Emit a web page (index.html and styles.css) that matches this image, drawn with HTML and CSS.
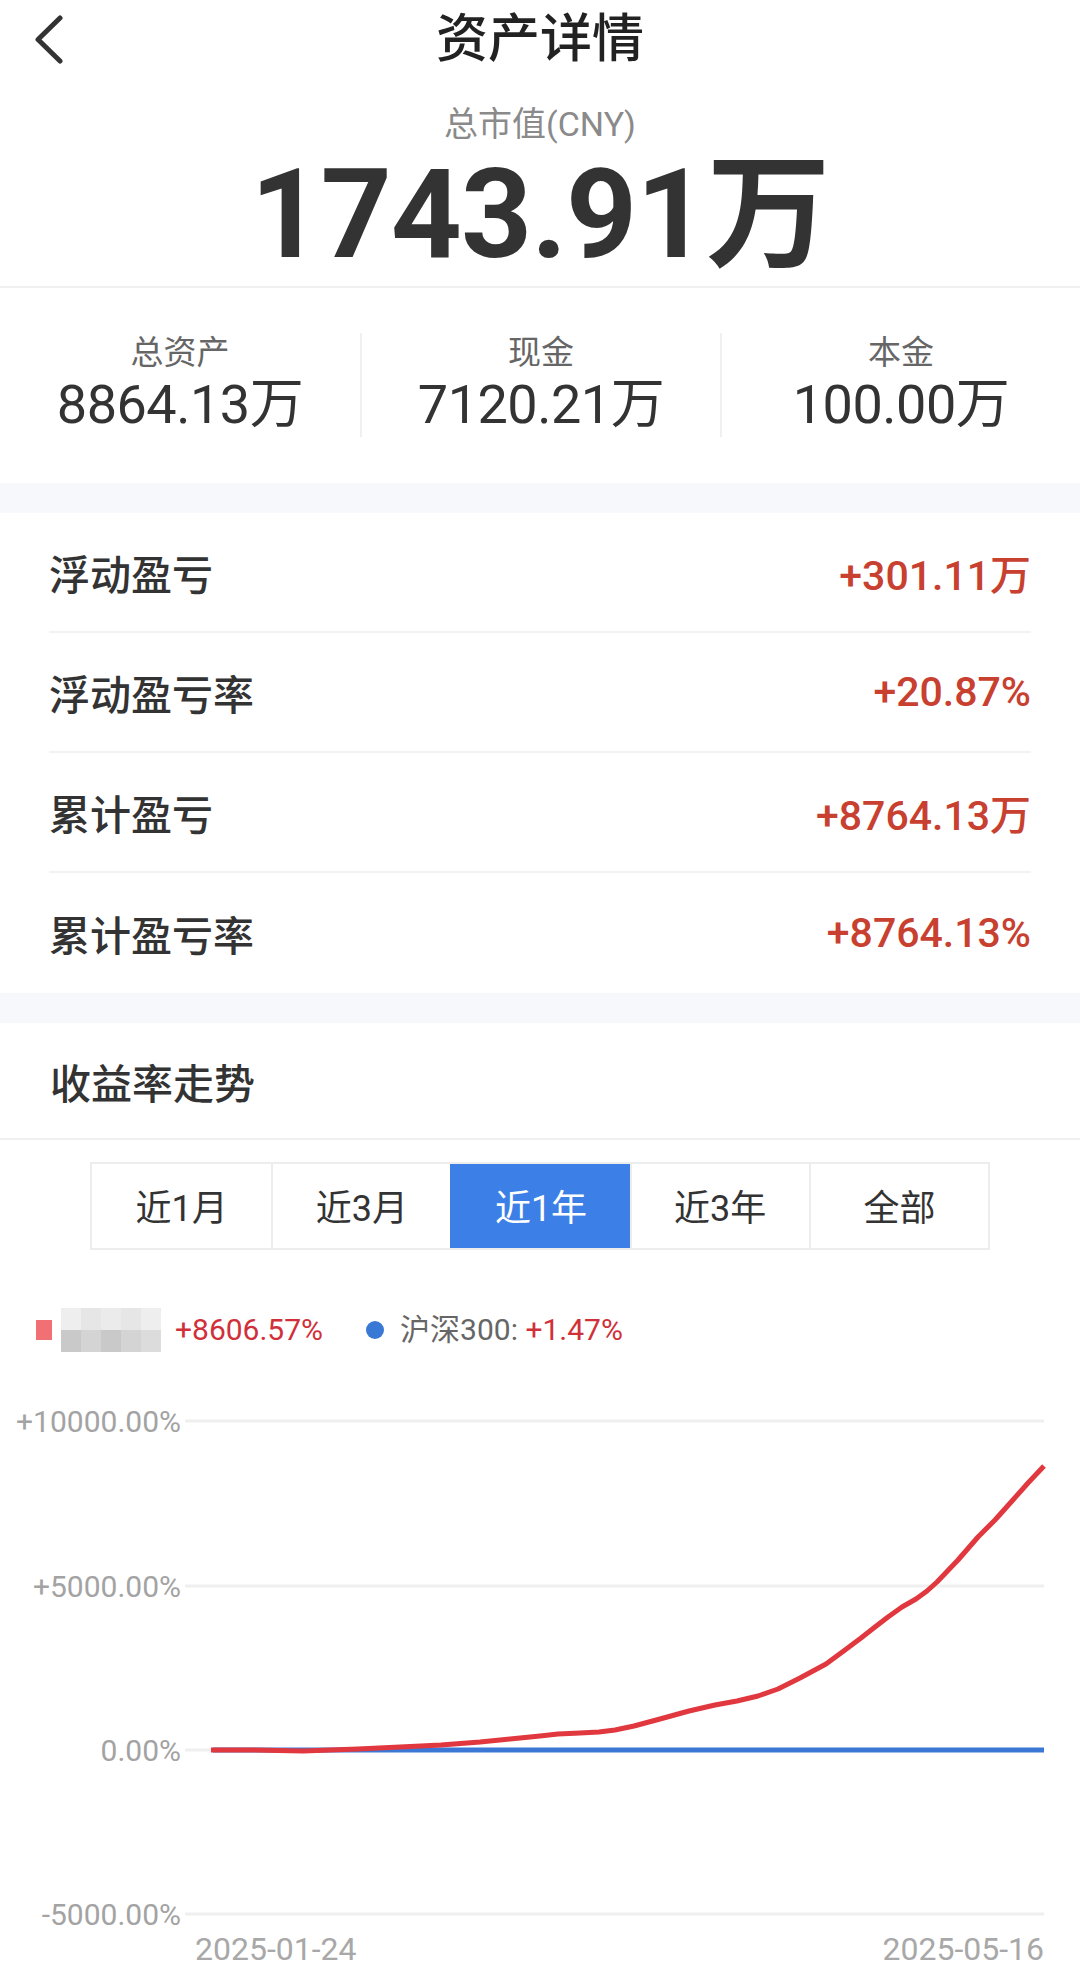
FILE: index.html
```html
<!DOCTYPE html>
<html lang="zh-CN">
<head>
<meta charset="utf-8">
<title>资产详情</title>
<link rel="stylesheet" href="styles.css">
</head>
<body>
<div class="page">
  <header class="nav">
    <div class="nav-back">
      <svg class="back-icon" width="30" height="50" viewBox="0 0 30 50"><polyline points="25,3 3,24.5 25,46" fill="none" stroke="#333" stroke-width="5" stroke-linecap="round" stroke-linejoin="round"/></svg>
    </div>
    <h1 class="nav-title">资产详情</h1>
    <div class="nav-side"></div>
  </header>

  <section class="summary">
    <div class="summary-label">总市值(CNY)</div>
    <div class="summary-value">1743.91万</div>
  </section>

  <section class="stats">
    <div class="stat">
      <div class="stat-label">总资产</div>
      <div class="stat-value">8864.13万</div>
    </div>
    <div class="stat">
      <div class="stat-label">现金</div>
      <div class="stat-value">7120.21万</div>
    </div>
    <div class="stat">
      <div class="stat-label">本金</div>
      <div class="stat-value">100.00万</div>
    </div>
  </section>

  <div class="band"></div>

  <section class="rows">
    <div class="row"><span class="row-label">浮动盈亏</span><span class="row-value">+301.11万</span></div>
    <div class="row"><span class="row-label">浮动盈亏率</span><span class="row-value">+20.87%</span></div>
    <div class="row"><span class="row-label">累计盈亏</span><span class="row-value">+8764.13万</span></div>
    <div class="row"><span class="row-label">累计盈亏率</span><span class="row-value">+8764.13%</span></div>
  </section>

  <div class="band"></div>

  <section class="trend">
    <h2 class="trend-title">收益率走势</h2>
    <div class="tabs">
      <div class="tab">近1月</div>
      <div class="tab">近3月</div>
      <div class="tab tab-active">近1年</div>
      <div class="tab">近3年</div>
      <div class="tab">全部</div>
    </div>

    <div class="legend">
      <span class="legend-swatch"></span>
      <span class="mosaic">
        <i class="m1"></i><i class="m2"></i><i class="m3"></i><i class="m2"></i><i class="m1"></i>
        <i class="m4"></i><i class="m5"></i><i class="m4"></i><i class="m5"></i><i class="m6"></i>
      </span>
      <span class="legend-value">+8606.57%</span>
      <span class="legend-dot"></span>
      <span class="legend-name">沪深300: </span><span class="legend-value legend-value-b">+1.47%</span>
    </div>

    <svg class="chart" width="1080" height="612" viewBox="0 0 1080 612">
      <g class="grid">
        <line x1="185" y1="66" x2="1044" y2="66"/>
        <line x1="185" y1="231" x2="1044" y2="231"/>
        <line x1="185" y1="395" x2="1044" y2="395"/>
        <line x1="185" y1="559" x2="1044" y2="559"/>
      </g>
      <g class="axis-y">
        <text x="181" y="77">+10000.00%</text>
        <text x="181" y="242">+5000.00%</text>
        <text x="181" y="406">0.00%</text>
        <text x="181" y="570">-5000.00%</text>
      </g>
      <g class="axis-x">
        <text x="195" y="605" text-anchor="start">2025-01-24</text>
        <text x="1044" y="605" text-anchor="end">2025-05-16</text>
      </g>
      <path class="line-blue" d="M213 395 H1044"/>
      <polyline class="line-red" points="211,395 250,395 303,396 358,394 400,392 441,390 480,387 510,384 540,381 558,379 580,378 599,377 615,375 634,371 660,364 689,356 715,350 737,346 758,341 778,334 800,323 826,309 845,295 861,283 875,272 888,262 902,252 916,244 927,236 937,227 958,205 978,182 995,165 1012,146 1028,128 1044,111"/>
    </svg>
  </section>
</div>
</body>
</html>
```

FILE: styles.css
```css
* {
  box-sizing: border-box;
}

html, body {
  margin: 0;
  padding: 0;
  background: #ffffff;
}

body {
  font-family: Roboto, "Noto Sans CJK SC", sans-serif;
  color: #333333;
}

.page {
  width: 1080px;
  height: 1967px;
  overflow: hidden;
  background: #ffffff;
}

/* nav */
.nav {
  height: 80px;
  display: grid;
  grid-template-columns: 120px 1fr 120px;
  align-items: center;
}

.nav-back {
  padding-left: 35px;
  display: flex;
  align-items: center;
}

.back-icon {
  display: block;
}

.nav-title {
  margin: 0;
  text-align: center;
  font-size: 52px;
  font-weight: 500;
  color: #222222;
  line-height: 80px;
}

/* summary */
.summary {
  padding-top: 24px;
  padding-bottom: 6px;
  text-align: center;
  border-bottom: 2px solid #f0f0f0;
}

.summary-label {
  font-size: 34px;
  line-height: 40px;
  color: #8a8a8a;
}

.summary-value {
  margin-top: 6px;
  font-size: 124px;
  line-height: 130px;
  font-weight: 700;
  color: #333333;
  letter-spacing: -1px;
}

/* stats */
.stats {
  display: grid;
  grid-template-columns: repeat(3, 1fr);
  padding-top: 45px;
  padding-bottom: 46px;
}

.stat {
  text-align: center;
  border-left: 2px solid #f0f0f0;
}

.stat:first-child {
  border-left: none;
}

.stat-label {
  font-size: 33px;
  line-height: 40px;
  color: #666666;
}

.stat-value {
  font-size: 54px;
  line-height: 64px;
  color: #333333;
  letter-spacing: -0.5px;
}

/* band */
.band {
  height: 30px;
  background: #f6f8fb;
}

/* rows */
.rows {
  padding: 0 49px;
}

.row {
  height: 120px;
  display: flex;
  align-items: center;
  justify-content: space-between;
  border-bottom: 2px solid #f2f2f2;
}

.row:last-child {
  border-bottom: none;
}

.row-label {
  font-size: 41px;
  font-weight: 500;
  color: #333333;
}

.row-value {
  font-size: 41px;
  font-weight: 500;
  color: #c8402f;
}

/* trend */
.trend-title {
  margin: 0;
  height: 117px;
  padding-left: 50px;
  display: flex;
  align-items: center;
  font-size: 41px;
  font-weight: 500;
  color: #333333;
  border-bottom: 2px solid #f0f0f0;
}

.tabs {
  width: 900px;
  height: 88px;
  margin: 22px auto 0;
  display: grid;
  grid-template-columns: repeat(5, 1fr);
  border: 2px solid #ededed;
}

.tab {
  display: flex;
  align-items: center;
  justify-content: center;
  font-size: 36px;
  color: #333333;
  border-left: 2px solid #ededed;
  padding-bottom: 2px;
}

.tab:first-child {
  border-left: none;
}

.tab-active {
  background: #3c7fe6;
  color: #ffffff;
  border-left-color: #3c7fe6;
}

/* legend */
.legend {
  margin-top: 60px;
  height: 40px;
  padding-left: 36px;
  display: flex;
  align-items: center;
  font-size: 30px;
  line-height: 40px;
}

.legend-swatch {
  width: 16px;
  height: 20px;
  background: #f07074;
  flex: none;
}

.mosaic {
  margin-left: 9px;
  width: 100px;
  height: 44px;
  display: grid;
  grid-template-columns: repeat(5, 20px);
  grid-template-rows: repeat(2, 22px);
  flex: none;
}

.mosaic i {
  display: block;
}

.m1 { background: #eeeeee; }
.m2 { background: #e6e6e6; }
.m3 { background: #ebebeb; }
.m4 { background: #c9c9c9; }
.m5 { background: #d4d4d4; }
.m6 { background: #dcdcdc; }

.legend-value {
  color: #d0303a;
  margin-left: 14px;
}

.legend-value-b {
  margin-left: 0;
}

.legend-dot {
  width: 18px;
  height: 18px;
  border-radius: 50%;
  background: #3a78d6;
  margin-left: 43px;
  margin-right: 16px;
  flex: none;
}

.legend-name {
  color: #666666;
  white-space: pre;
}

/* chart */
.chart {
  display: block;
  margin-top: 5px;
}

.grid line {
  stroke: #efefef;
  stroke-width: 3;
}

.axis-y text {
  font-family: Roboto, sans-serif;
  font-size: 30px;
  fill: #a3a3a3;
  text-anchor: end;
}

.axis-x text {
  font-family: Roboto, sans-serif;
  font-size: 32px;
  fill: #a8a8a8;
}

.line-blue {
  fill: none;
  stroke: #3b78d6;
  stroke-width: 5;
}

.line-red {
  fill: none;
  stroke: #e0383e;
  stroke-width: 5;
  stroke-linejoin: round;
}
```
